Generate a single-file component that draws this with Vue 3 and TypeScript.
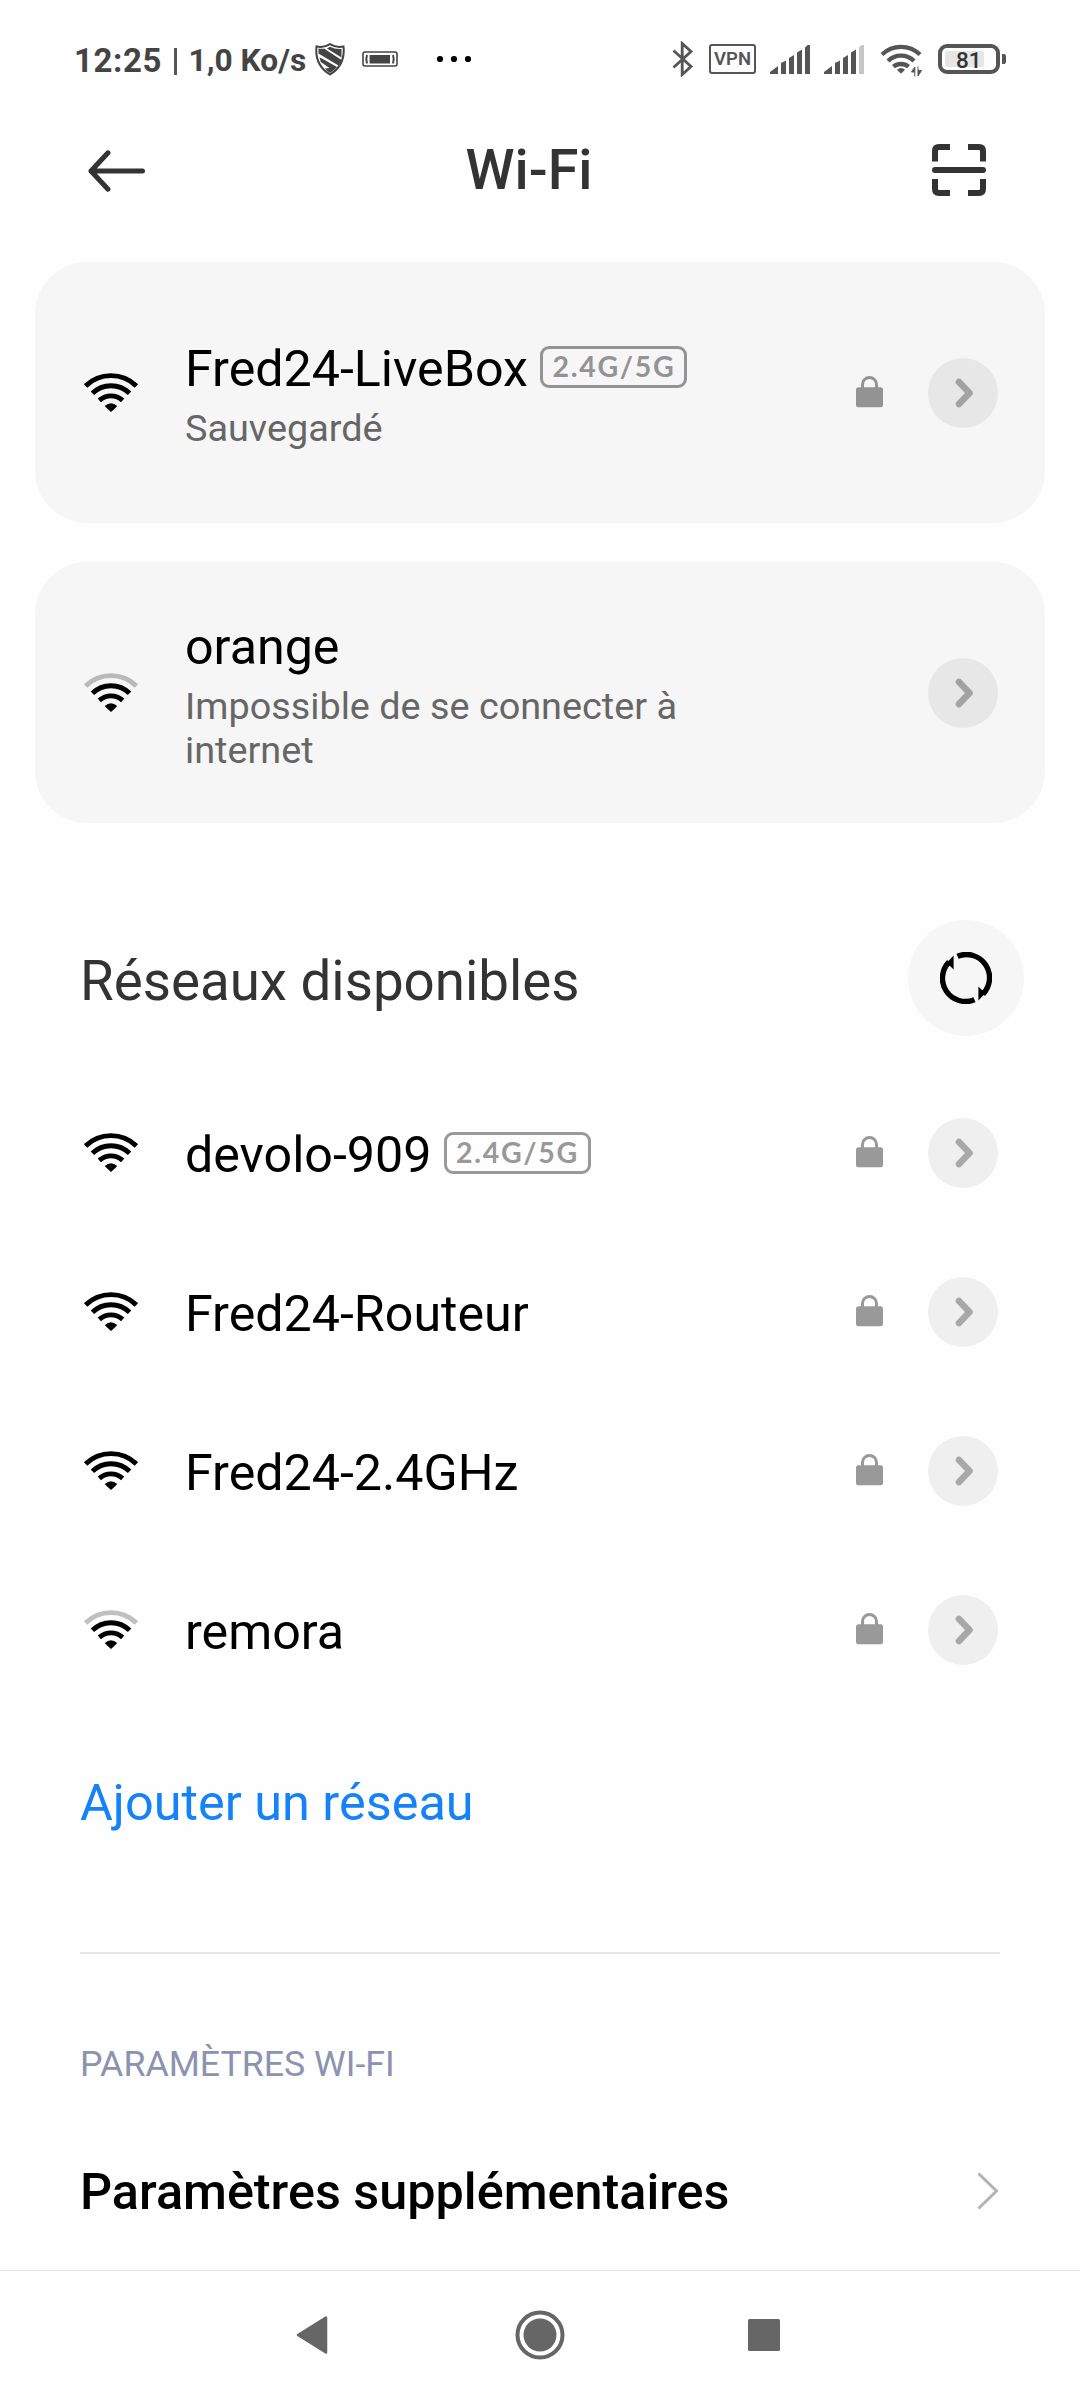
<script setup lang="ts">
interface Network {
  name: string
  note?: string
  dualBand?: boolean
  locked?: boolean
  weak?: boolean
  card?: boolean
}

const networks: Network[] = [
  { name: 'Fred24-LiveBox', note: 'Sauvegardé', dualBand: true, locked: true, card: true },
  { name: 'orange', note: 'Impossible de se connecter à internet', weak: true, card: true },
  { name: 'devolo-909', dualBand: true, locked: true },
  { name: 'Fred24-Routeur', locked: true },
  { name: 'Fred24-2.4GHz', locked: true },
  { name: 'remora', locked: true, weak: true },
]

const groups = [
  { title: '', items: networks.filter((n) => n.card) },
  { title: 'Réseaux disponibles', items: networks.filter((n) => !n.card) },
]

const bars: string[] = [
  'M0 29V27L8 21V29Z',
  'M11 29V18L16 15.6V29Z',
  'M19 29V13L24 10V29Z',
  'M27 29V7.6L32 4.6V29Z',
  'M35 29V2.4L37.6 0H40V29Z',
]
</script>

<template>
  <div class="screen">
    <div class="status">
      <span class="clock">12:25</span>
      <span class="pipe"></span>
      <span class="speed">1,0 Ko/s</span>
      <svg class="shield" width="30" height="33" viewBox="0 0 30 33">
        <path d="M1.500 3.500Q9 5 15 1.200Q21 5 28.500 3.500Q30.500 22 15 31.500Q-.5 22 1.500 3.500Z" fill="#fefefe" stroke="#444" stroke-width="2" />
        <path d="M3.500 5.500Q6.500 6.200 9 5.500L26.500 17Q25.500 20 23.500 22.500L3.500 10.500Z" fill="#444" />
        <path d="M12 5.500L15 3.800Q20 6.500 26.500 6V14.500Z" fill="#444" />
        <path d="M4.500 14.500L7 15.500L22 24Q19 27.500 15 30Q12 28 10 25.500L14.500 25L5.800 19Z" fill="#444" />
      </svg>
      <svg class="cell" width="36" height="16" viewBox="0 0 36 16">
        <rect x="1" y="1" width="34" height="14" rx="2" fill="none" stroke="#444" stroke-width="1.600" />
        <rect x="7.600" y="4" width="20.400" height="8.500" fill="#444" />
        <path d="M5 4Q3.600 8 5 12.500M31 4Q32.400 8 31 12.500" fill="none" stroke="#444" stroke-width="2" />
      </svg>
      <svg class="dots" width="36" height="8" viewBox="0 0 36 8">
        <circle cx="4" cy="4" r="3.100" /><circle cx="18" cy="4" r="3.100" /><circle cx="32" cy="4" r="3.100" />
      </svg>
      <div class="status-right">
        <svg class="bt" width="22" height="36" viewBox="0 0 22 36">
          <path d="M1.500 9.500L19 25.500L10.200 33.500V2.500L19 10.500L1.500 26.500" fill="none" stroke="#555" stroke-width="2.800" />
        </svg>
        <span class="vpn">VPN</span>
        <svg class="sim1" width="40" height="29" viewBox="0 0 40 29">
          <path v-for="(b, i) in bars" :key="i" :d="b" fill="#555" />
        </svg>
        <svg class="sim2" width="40" height="29" viewBox="0 0 40 29">
          <path v-for="(b, i) in bars" :key="i" :d="b" :fill="i === 4 ? '#c6c6c6' : '#555'" />
        </svg>
        <svg class="swifi" width="44" height="35" viewBox="0 0 44 35">
          <g fill="none" stroke="#555" stroke-width="4.300">
            <path d="M2 11.500A27.500 27.500 0 0 1 40 11.500" />
            <path d="M8 18A18.500 18.500 0 0 1 34 18" />
            <path d="M13.400 23.700A12 12 0 0 1 28.600 23.700" />
          </g>
          <path d="M17 26.800Q21 23.400 25 26.800L21 30.800Z" fill="#555" />
          <path d="M34.800 33.500V24L31.500 29H34.800M38 23.500V33L41.500 27.500H38" fill="#555" stroke="#555" stroke-width="1" />
        </svg>
        <span class="battery"><span class="level">81</span></span>
        <span class="nub"></span>
      </div>
    </div>

    <header class="bar">
      <svg class="back" width="58" height="42" viewBox="0 0 58 42">
        <path d="M54.500 21H3L20 2.800M3 21L20 39.200" fill="none" stroke="#333" stroke-width="5" stroke-linecap="round" stroke-linejoin="round" />
      </svg>
      <h1>Wi-Fi</h1>
      <svg class="scan" width="54" height="54" viewBox="0 0 54 54">
        <g fill="none" stroke="#333" stroke-width="6">
          <path d="M3 18.500V8Q3 4 7 4H18M36 4H47Q51 4 51 8V18.500M51 36V46Q51 50 47 50H36M18 50H7Q3 50 3 46V36" />
          <path d="M3 27H51" stroke-linecap="round" />
        </g>
      </svg>
    </header>

    <section v-for="(g, gi) in groups" :key="gi">
      <div v-if="g.title" class="section-head">
        <h2>{{ g.title }}</h2>
        <div class="refresh">
          <svg width="52" height="52" viewBox="0 0 52 52">
            <g fill="none" stroke="#000" stroke-width="5.400">
              <path d="M17.500 4.200A23.300 23.300 0 0 1 43 42" />
              <path d="M34.500 47.800A23.300 23.300 0 0 1 9 10" />
            </g>
            <path d="M13.600 3.500V17.500L9.500 13.500L5 12.500ZM38.400 48.500V34.500L42.500 38.500L47 39.500Z" />
          </svg>
        </div>
      </div>
      <div v-for="n in g.items" :key="n.name" class="row" :class="{ card: n.card }">
        <svg class="wifi" width="54" height="40" viewBox="0 0 54 40">
          <g fill="none" stroke="#000" stroke-width="4.900">
            <path d="M1.600 12.900A36.500 36.500 0 0 1 52.400 12.900" :stroke="n.weak ? (n.card ? '#b9b9b9' : '#c0c0c0') : '#000'" />
            <path d="M8.400 20.300A26.500 26.500 0 0 1 45.600 20.300" />
            <path d="M15.300 27.400A17.500 17.500 0 0 1 38.700 27.400" />
          </g>
          <path d="M20.800 33Q27 27.400 33.200 33Q32.600 34 27 39Q21.400 34 20.800 33Z" />
        </svg>
        <div class="info">
          <div class="name"><span>{{ n.name }}</span><span v-if="n.dualBand" class="band">2.4G/5G</span></div>
          <div v-if="n.note" class="note">{{ n.note }}</div>
        </div>
        <svg v-if="n.locked" class="lock" width="27" height="32" viewBox="0 0 27 32">
          <rect x="0" y="11.200" width="27" height="20" rx="2.500" />
          <path d="M6.500 12V8.500A7 7 0 0 1 20.500 8.500V12" />
        </svg>
        <span class="more">
          <svg width="20" height="30" viewBox="0 0 20 30">
            <path d="M4 4L14.500 15L4 26" fill="none" stroke-width="6.600" stroke-linecap="round" stroke-linejoin="round" />
          </svg>
        </span>
      </div>
    </section>

    <a class="add">Ajouter un réseau</a>
    <div class="rule"></div>
    <div class="label">PARAMÈTRES WI-FI</div>
    <div class="extra">
      <span>Paramètres supplémentaires</span>
      <svg width="22" height="38" viewBox="0 0 22 38">
        <path d="M1.500 1.500L19.500 19L1.500 36.500" fill="none" stroke="#b3b3b3" stroke-width="3" />
      </svg>
    </div>

    <nav class="nav">
      <svg width="32" height="40" viewBox="0 0 32 40">
        <path d="M2 20L30 2.600V37.400Z" fill="#666" stroke="#666" stroke-width="2.500" stroke-linejoin="round" />
      </svg>
      <svg class="home" width="50" height="50" viewBox="0 0 50 50">
        <circle cx="25" cy="25" r="22.500" fill="none" stroke="#666" stroke-width="4" />
        <circle cx="25" cy="25" r="16.500" fill="#666" />
      </svg>
      <svg width="32" height="32" viewBox="0 0 32 32"><rect width="32" height="32" rx="1.500" fill="#666" /></svg>
    </nav>
  </div>
</template>

<style>
body { background: #fefefe; }
</style>

<style scoped>
.screen {
  width: 1080px;
  height: 2400px;
  overflow: hidden;
  background: #fefefe;
  color: #000;
  font-family: Roboto, "Noto Sans", sans-serif;
  display: flex;
  flex-direction: column;
}
.screen * { box-sizing: border-box; }
svg { display: block; flex: none; }
section { display: flex; flex-direction: column; }
.status {
  height: 118px;
  flex: none;
  display: flex;
  align-items: center;
  padding-left: 74px;
  color: #444;
  white-space: nowrap;
}
.clock { width: 99.500px; font-size: 33px; font-weight: 700; letter-spacing: 0.6px; padding-top: 2px; }
.pipe { width: 3px; height: 27px; background: #555; margin-top: 4px; }
.speed { width: 138.500px; padding: 2px 0 0 12px; font-size: 31.700px; font-weight: 700; }
.cell { margin-left: 17px; }
.dots { margin-left: 38px; fill: #000; }
.status-right { display: flex; align-items: center; margin-left: auto; padding-right: 74px; }
.vpn {
  width: 47px;
  height: 30px;
  margin-left: 15px;
  border: 2.500px solid #555;
  border-radius: 3px;
  color: #555;
  font-size: 18.500px;
  line-height: 27px;
  font-weight: 600;
  text-align: center;
}
.sim1 { margin-left: 14px; }
.sim2 { margin-left: 14px; }
.swifi { margin-left: 16px; margin-top: 2px; }
.battery {
  width: 62px;
  height: 30px;
  margin-left: 14px;
  padding: 3px 0 0 3px;
  border: 4px solid #555;
  border-radius: 9px;
}
.level {
  display: block;
  width: 39px;
  height: 16px;
  padding-left: 11px;
  border-radius: 2px;
  background: #e6e6e6;
  color: #333;
  font-size: 22.500px;
  line-height: 19px;
  font-weight: 500;
}
.nub { width: 4px; height: 10px; margin-left: 2px; border-radius: 0 2px 2px 0; background: #555; }
.bar {
  height: 104px;
  margin-bottom: 40px;
  flex: none;
  display: grid;
  grid-template-columns: 1fr auto 1fr;
  align-items: center;
  padding: 0 94px 0 88px;
}
.back { margin-top: 2px; }
.scan { justify-self: end; }
h1, h2 { margin: 0; color: #333; }
h1 { font-size: 55.700px; line-height: 66px; font-weight: 500; padding-right: 16px; }
h2 { font-size: 54.700px; line-height: 64px; font-weight: 400; padding-top: 6px; }
.row {
  height: 159px;
  display: flex;
  align-items: center;
  padding: 1px 82px 0 84px;
}
.row.card {
  height: 261px;
  margin: 0 35px 39px;
  padding: 1px 47px 0 49px;
  border-radius: 52px;
  background: #f6f6f6;
}
.wifi { margin-top: -1px; }
.info { flex: 1; margin-left: 47px; padding-top: 4px; }
.card .info { padding-top: 0; }
.name { display: flex; align-items: center; font-size: 50.200px; line-height: 66px; white-space: nowrap; }
.band {
  width: 147px;
  height: 42px;
  margin: -5px 0 0 12.500px;
  border: 3px solid #999;
  border-radius: 9px;
  color: #999;
  font-family: Lato, Roboto, sans-serif;
  font-size: 28.500px;
  line-height: 35px;
  font-weight: 700;
  letter-spacing: 1.700px;
  text-align: center;
}
.note { width: 520px; margin-top: 4px; font-size: 37.800px; line-height: 44px; color: #666; }
.lock { margin: -2px 45px 0 0; fill: #999; stroke: #999; }
.lock rect { stroke: none; }
.lock path { fill: none; stroke-width: 3px; }
.card .lock { fill: #939393; stroke: #939393; }
.card .band { border-color: #939393; color: #939393; }
.more {
  width: 70px;
  height: 70px;
  flex: none;
  display: grid;
  place-items: center;
  padding-left: 3px;
  border-radius: 50%;
  background: #efefef;
  stroke: #a8a8a8;
}
.card .more { background: #e7e7e7; stroke: #a2a2a2; }
.section-head {
  display: flex;
  justify-content: space-between;
  align-items: center;
  margin: 58px 0 37px;
  padding: 0 56px 0 80px;
}
.refresh {
  width: 116px;
  height: 116px;
  display: grid;
  place-items: center;
  border-radius: 50%;
  background: #f6f6f6;
}
.add { height: 188px; padding-left: 80px; font-size: 50.400px; line-height: 188px; color: #1583f7; }
.rule { height: 2px; margin: 55px 80px 85px; flex: none; background: #e5e5e5; }
.label { padding-left: 80px; font-size: 35.700px; line-height: 50px; color: #8c93b0; }
.extra {
  height: 157px;
  margin-top: 24px;
  display: flex;
  justify-content: space-between;
  align-items: center;
  padding: 0 81px 2px 80px;
  font-size: 50.350px;
  font-weight: 500;
}
.extra span { padding-top: 2px; }
.nav {
  height: 130px;
  border-top: 1px solid #e3e3e3;
  display: flex;
  justify-content: space-between;
  align-items: center;
  padding: 0 300px 1px 296px;
}
.home { margin-left: 3px; }
</style>
